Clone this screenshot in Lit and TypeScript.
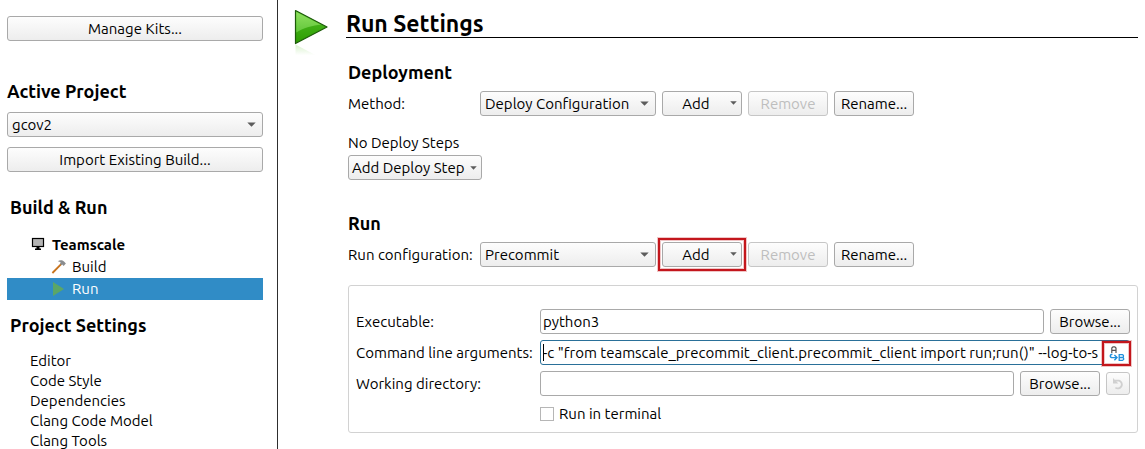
import { LitElement, html, css } from "lit";
import { customElement, property } from "lit/decorators.js";

const caretIcon = (small = false) => html`
  <svg class="caret ${small ? "small" : ""}" viewBox="0 0 9 5" aria-hidden="true">
    <path d="M0.3 0.4H8.7L4.5 4.8Z" fill="#5c5c5c" />
  </svg>
`;

const controls = css`
  :host {
    font-family: Ubuntu, "Noto Sans", sans-serif;
    font-size: 15px;
    line-height: 20px;
    color: #000;
  }
  * {
    box-sizing: border-box;
  }
  button,
  select,
  input {
    font: inherit;
    color: inherit;
    margin: 0;
  }
  button,
  select {
    height: 25px;
    border: 1px solid #a9a9a9;
    border-radius: 3px;
    background: linear-gradient(#fdfdfd, #ededed);
    appearance: none;
    white-space: nowrap;
  }
  button {
    display: flex;
    align-items: center;
    justify-content: center;
    padding: 0 4px;
    min-width: 80px;
  }
  button:disabled {
    color: #bebebe;
    border-color: #c6c6c6;
  }
  .wide {
    width: 100%;
  }
  .caret {
    width: 9px;
    height: 5px;
    flex: none;
  }
  .caret.small {
    width: 7px;
    height: 4px;
  }
`;

@customElement("combo-box")
export class ComboBox extends LitElement {
  @property() label = "";
  @property() value = "";

  static styles = [
    controls,
    css`
      :host {
        display: grid;
        align-items: center;
      }
      select {
        grid-area: 1 / 1;
        width: 100%;
        padding: 0 20px 0 4px;
      }
      .caret {
        grid-area: 1 / 1;
        justify-self: end;
        margin-right: 7px;
        pointer-events: none;
      }
    `,
  ];

  render() {
    return html`
      <select aria-label=${this.label}><option selected>${this.value}</option></select>
      ${caretIcon()}
    `;
  }
}

@customElement("project-sidebar")
export class ProjectSidebar extends LitElement {
  private settings = ["Editor", "Code Style", "Dependencies", "Clang Code Model", "Clang Tools"];

  static styles = [
    controls,
    css`
      :host {
        display: block;
        padding: 16px 14px 0 7px;
        border-right: 1px solid #2e2e2e;
      }
      h2 {
        margin: 0;
        font-size: 18px;
        line-height: 24px;
        font-weight: 700;
      }
      .project {
        display: grid;
        gap: 10px;
        padding-top: 38px;
      }
      .project h2 {
        margin-bottom: -1px;
      }
      .group {
        padding: 0 0 0 3px;
      }
      .build {
        padding-top: 23px;
      }
      .tree {
        padding-top: 15px;
        display: grid;
      }
      .node {
        display: flex;
        align-items: center;
        height: 22px;
        gap: 5px;
        padding-left: 44px;
        color: inherit;
        text-decoration: none;
      }
      .kit {
        padding-left: 23px;
        gap: 6px;
        font-weight: 700;
      }
      .selected {
        background: #308cc6;
        color: #fff;
      }
      .node svg {
        width: 16px;
        height: 16px;
        flex: none;
      }
      .more {
        padding-top: 13px;
      }
      .links {
        display: grid;
        padding: 14px 0 0 23px;
      }
      .links a {
        color: inherit;
        text-decoration: none;
      }
    `,
  ];

  render() {
    return html`
      <button class="wide">Manage Kits...</button>
      <section class="project">
        <h2>Active Project</h2>
        <combo-box label="Active Project" value="gcov2"></combo-box>
        <button class="wide">Import Existing Build...</button>
      </section>
      <h2 class="group build">Build &amp; Run</h2>
      <nav class="tree" aria-label="Build and run">
        <a class="node kit" href="#kit">
          <svg viewBox="0 0 16 16" aria-hidden="true">
            <rect x="2.5" y="1.5" width="11" height="8" fill="#b4b4b4" stroke="#000" stroke-width="1.2" />
            <path d="M6.5 10H9.5V11.4H11V13H5V11.4H6.5Z" fill="#000" />
          </svg>
          Teamscale
        </a>
        <a class="node" href="#build">
          <svg viewBox="0 0 16 16" aria-hidden="true">
            <path d="M1.4 14L10.4 4.8" stroke="#c8731c" stroke-width="1.8" fill="none" />
            <path d="M6.8 2.2C8.8 0.8 11.5 1 13 2.6L14.9 4.6L12.6 7L11.2 5.6L10.4 6.2L9 4.8L9.8 3.8C9 2.8 8 2.4 6.8 2.2Z" fill="#8a8d90" />
          </svg>
          Build
        </a>
        <a class="node selected" href="#run" aria-current="page">
          <svg viewBox="0 0 16 16" aria-hidden="true">
            <path d="M2 1L13 8L2 15Z" fill="#5ba667" />
          </svg>
          Run
        </a>
      </nav>
      <h2 class="group more">Project Settings</h2>
      <nav class="links" aria-label="Project settings">
        ${this.settings.map((name) => html`<a href="#settings">${name}</a>`)}
      </nav>
    `;
  }
}

@customElement("run-settings")
export class RunSettings extends LitElement {
  static styles = [
    controls,
    css`
      :host {
        display: grid;
        grid-template-columns: 54px minmax(0, 1fr);
        padding: 8px 7px 0 14px;
        align-content: start;
      }
      .logo {
        width: 38px;
        height: 52px;
      }
      h1 {
        margin: 0;
        height: 30px;
        font-size: 23px;
        line-height: 32px;
        border-bottom: 1px solid #000;
      }
      h2 {
        margin: 0;
        font-size: 18px;
        line-height: 24px;
      }
      .body {
        padding-left: 2px;
      }
      .body section {
        padding-top: 22px;
      }
      .row {
        display: flex;
        align-items: center;
        gap: 6px;
        padding-top: 7px;
      }
      .row .name {
        width: 126px;
        white-space: nowrap;
      }
      .row combo-box {
        width: 176px;
      }
      .menu {
        position: relative;
        width: 80px;
        padding-right: 16px;
      }
      .menu .caret {
        position: absolute;
        right: 4px;
        top: 9px;
      }
      .steps {
        margin: 17px 0 2px;
      }
      .step {
        width: 134px;
        padding: 0 4px 0 3px;
        justify-content: space-between;
      }
      .body .run {
        padding-top: 31px;
      }
      .mark {
        display: flex;
        position: relative;
      }
      .mark::after {
        content: "";
        position: absolute;
        inset: -4px;
        border: 2px solid #c3161c;
        box-shadow: 0 0 0 1px #c3161c40, inset 0 0 0 1px #c3161c40;
        pointer-events: none;
      }
      .panel {
        display: grid;
        grid-template-columns: 178px minmax(0, 1fr);
        align-items: center;
        gap: 6px;
        margin-top: 18px;
        padding: 23px 7px 6px;
        border: 1px solid #d2d2d2;
        border-radius: 3px;
      }
      .panel label {
        white-space: nowrap;
      }
      .field {
        display: flex;
        align-items: center;
        gap: 6px;
      }
      .text {
        flex: 1;
        min-width: 0;
        height: 25px;
        padding: 0 2px;
        border: 1px solid #a9a9a9;
        border-radius: 3px;
        background: #fff;
        outline: none;
      }
      .args {
        position: relative;
      }
      .args .text {
        border-color: #2a7099;
        padding-right: 31px;
      }
      .cursor {
        position: absolute;
        left: 3px;
        top: 4px;
        width: 1px;
        height: 17px;
        background: #000;
      }
      .variables {
        position: absolute;
        right: -1px;
        top: 1px;
        width: 29px;
        min-width: 0;
        height: 25px;
        padding: 0;
        border: 2px solid #c3161c;
        border-radius: 0;
        box-shadow: 0 0 0 1px #c3161c40, inset 0 0 0 1px #c3161c40;
        background: #fff;
      }
      .variables svg,
      .reset svg {
        width: 16px;
        height: 16px;
        flex: none;
      }
      .reset {
        width: 24px;
        height: 23px;
        min-width: 0;
        padding: 0;
      }
      .terminal {
        grid-column: 2;
        display: flex;
        align-items: center;
        gap: 5px;
        height: 24px;
      }
      .terminal input {
        appearance: none;
        width: 14px;
        height: 14px;
        border: 1px solid #b6b6b6;
        background: #fff;
      }
    `,
  ];

  private renderLogo() {
    return html`
      <svg class="logo" viewBox="0 0 38 52" aria-hidden="true">
        <defs>
          <linearGradient id="face" x1="0" y1="0" x2="0" y2="1">
            <stop offset="0" stop-color="#5cc52f" />
            <stop offset="0.5" stop-color="#3fae14" />
            <stop offset="1" stop-color="#2c9c00" />
          </linearGradient>
          <linearGradient id="shine" x1="0" y1="0" x2="0" y2="1">
            <stop offset="0" stop-color="#8fe05f" />
            <stop offset="1" stop-color="#62c63a" />
          </linearGradient>
          <linearGradient id="mirror" x1="0" y1="0" x2="0" y2="1">
            <stop offset="0" stop-color="#7fd35a" stop-opacity="0.3" />
            <stop offset="0.8" stop-color="#7fd35a" stop-opacity="0" />
          </linearGradient>
        </defs>
        <path d="M3.5 36.5L29 50H3.5Z" fill="url(#mirror)" />
        <path d="M3.5 2.5L35 19L3.5 35.5Z" fill="url(#face)" stroke="#1d5a0a" stroke-width="1.2" stroke-linejoin="round" />
        <path d="M4.3 4L29 16.8C21 17.4 12 19.5 4.3 24.5Z" fill="url(#shine)" />
      </svg>
    `;
  }

  private renderActions(label: string, value: string, marked: boolean) {
    const add = html`<button class="menu">Add ${caretIcon(true)}</button>`;
    return html`
      <div class="row">
        <span class="name">${label}</span>
        <combo-box label=${label} value=${value}></combo-box>
        ${marked ? html`<span class="mark">${add}</span>` : add}
        <button disabled>Remove</button>
        <button>Rename...</button>
      </div>
    `;
  }

  render() {
    return html`
      ${this.renderLogo()}
      <div>
        <h1>Run Settings</h1>
        <div class="body">
          <section>
            <h2>Deployment</h2>
            ${this.renderActions("Method:", "Deploy Configuration", false)}
            <p class="steps">No Deploy Steps</p>
            <button class="step">Add Deploy Step ${caretIcon(true)}</button>
          </section>
          <section class="run">
            <h2>Run</h2>
            ${this.renderActions("Run configuration:", "Precommit", true)}
            <div class="panel">
              <label for="exe">Executable:</label>
              <div class="field">
                <input class="text" id="exe" value="python3" />
                <button>Browse...</button>
              </div>
              <label for="args">Command line arguments:</label>
              <div class="field args">
                <input
                  class="text"
                  id="args"
                  spellcheck="false"
                  value='-c "from teamscale_precommit_client.precommit_client import run;run()" --log-to-stderr'
                />
                <span class="cursor"></span>
                <button class="variables" aria-label="Insert variable">
                  <svg viewBox="0 0 16 16" fill="none" aria-hidden="true">
                    <path d="M2.8 7V2L4 0.8H5.8L7 2V7M2.8 4.3H7" stroke="#555" stroke-width="1.2" />
                    <path d="M3.4 8.2C0.6 8.4 0.6 11.6 3.4 11.6H7.6M5.4 9L8 11.6L5.4 14.2" stroke="#2090dc" stroke-width="1.4" />
                    <path d="M10.2 8.6V14.4H13.4L14.6 13.5V12.2L13.8 11.5L14.4 10.8V9.4L13.4 8.6ZM10.2 11.5H13.8" stroke="#2090dc" stroke-width="1.3" />
                  </svg>
                </button>
              </div>
              <label for="dir">Working directory:</label>
              <div class="field">
                <input class="text" id="dir" />
                <button>Browse...</button>
                <button class="reset" disabled aria-label="Reset">
                  <svg viewBox="0 0 16 16" fill="none" aria-hidden="true">
                    <path d="M5 4.6H9A4 4 0 1 1 5.4 11.6" stroke="#d0d0d0" stroke-width="1.8" />
                    <path d="M3 2V7.4H8.4Z" fill="#d0d0d0" />
                  </svg>
                </button>
              </div>
              <div class="terminal">
                <input type="checkbox" id="term" />
                <label for="term">Run in terminal</label>
              </div>
            </div>
          </section>
        </div>
      </div>
    `;
  }
}

@customElement("app-root")
export class AppRoot extends LitElement {
  static styles = css`
    :host {
      display: grid;
      grid-template-columns: 278px minmax(0, 1fr);
      height: 100vh;
      overflow: hidden;
      background: #fff;
    }
  `;

  render() {
    return html`
      <project-sidebar></project-sidebar>
      <run-settings></run-settings>
    `;
  }
}
